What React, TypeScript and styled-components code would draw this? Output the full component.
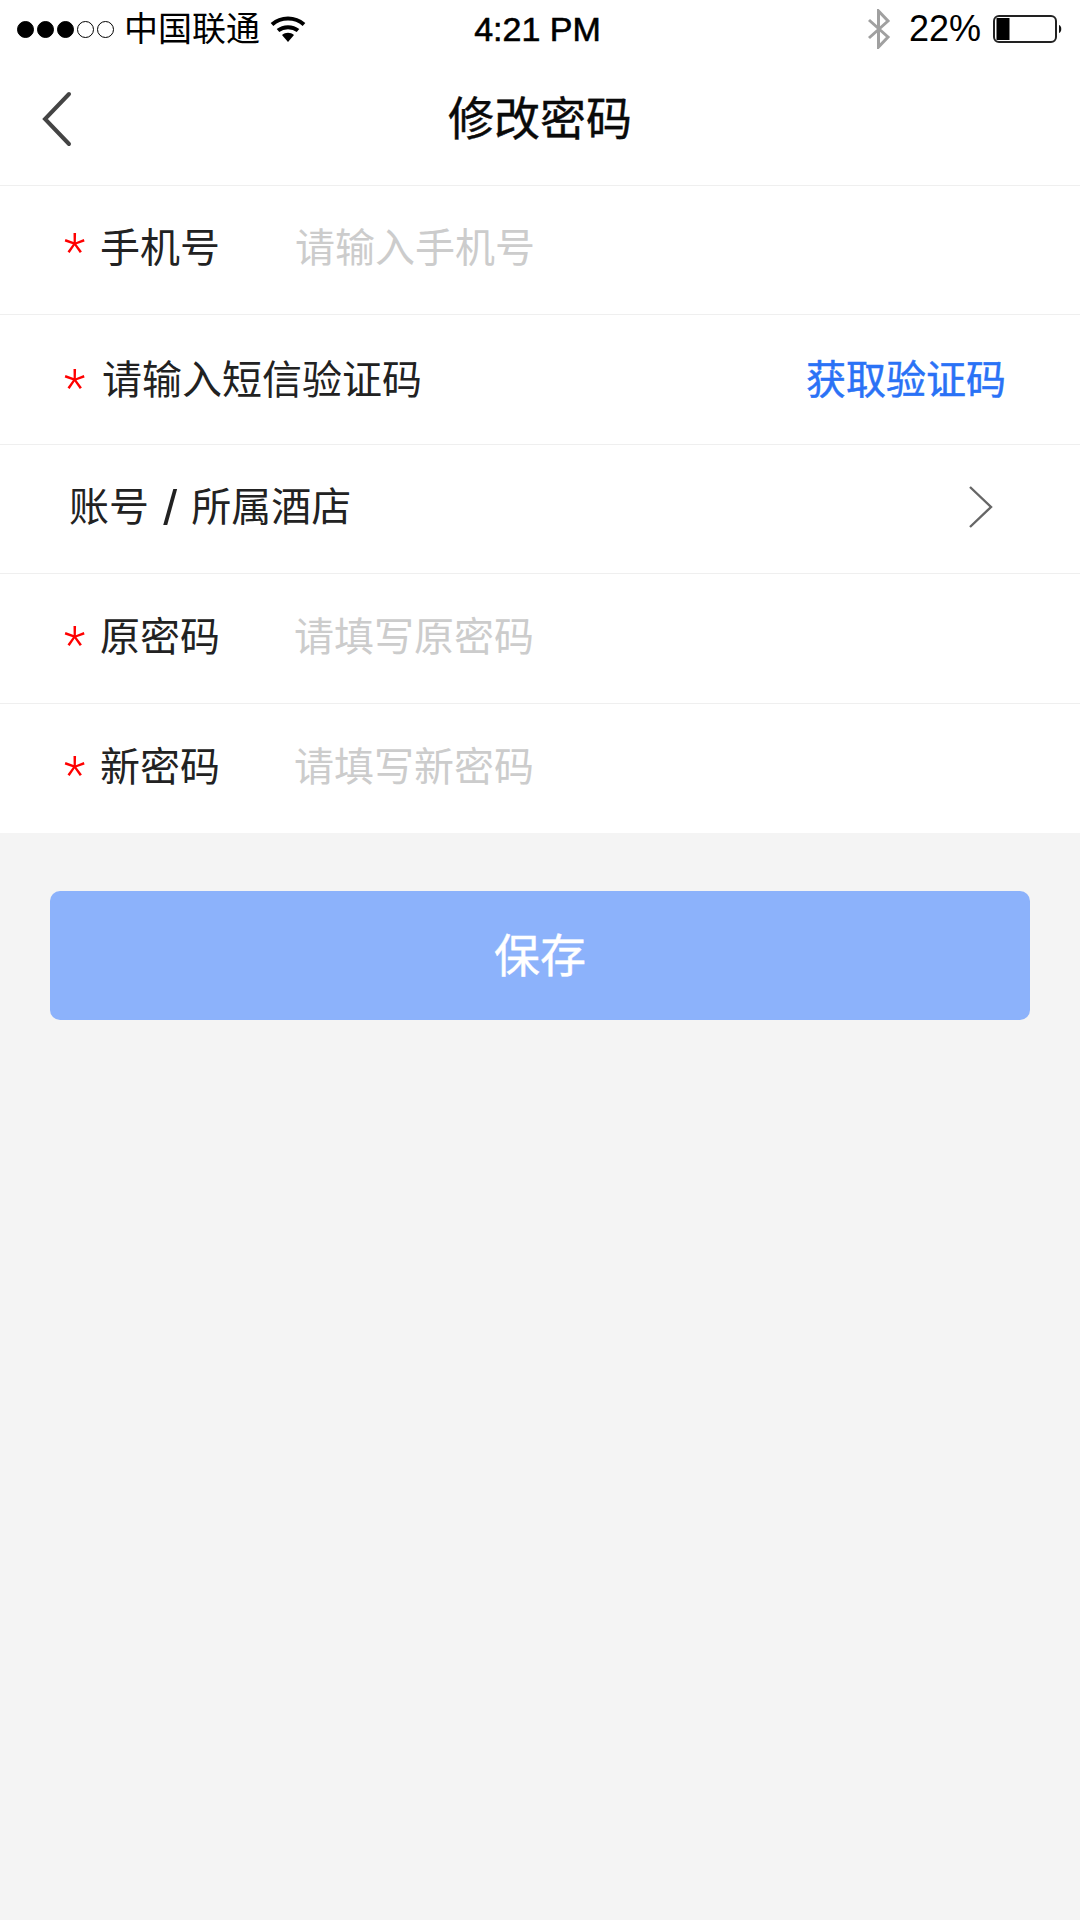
import React from "react";
import styled, { createGlobalStyle } from "styled-components";

const GlobalStyle = createGlobalStyle`
  html, body {
    margin: 0;
    padding: 0;
    background: #f4f4f4;
  }
  body {
    font-family: "Liberation Sans", "Noto Sans CJK SC", sans-serif;
  }
`;

const Page = styled.div`
  width: 1080px;
  min-height: 1920px;
  background: #f4f4f4;
  display: flex;
  flex-direction: column;
`;

const StatusBar = styled.div`
  height: 58px;
  background: #fff;
  padding: 0 16px 0 17px;
  display: grid;
  grid-template-columns: 1fr auto 1fr;
  align-items: center;
  color: #000;
`;

const StatusLeft = styled.div`
  display: flex;
  align-items: center;
  gap: 10px;
`;

const StatusRight = styled.div`
  display: flex;
  align-items: center;
  justify-content: flex-end;
`;

const Signal = styled.div`
  display: flex;
  gap: 3px;
  width: 97px;
`;

const Dot = styled.span<{ $on: boolean }>`
  width: 17px;
  height: 17px;
  border-radius: 50%;
  box-sizing: border-box;
  border: 1px solid #000;
  background: ${(p) => (p.$on ? "#000" : "#fff")};
`;

const Carrier = styled.span`
  font-size: 34px;
  line-height: 40px;
`;

const Clock = styled.span`
  font-size: 34px;
  -webkit-text-stroke: 0.6px #000;
  margin-right: 6px;
`;

const Percent = styled.span`
  font-size: 36px;
  margin: 0 12px 0 18px;
`;

const NavBar = styled.header`
  height: 127px;
  background: #fff;
  border-bottom: 1px solid #efefef;
  display: flex;
  align-items: center;
  justify-content: center;
  position: relative;
`;

const BackButton = styled.svg`
  position: absolute;
  left: 41px;
  top: 32px;
`;

const Title = styled.h1`
  margin: 0;
  padding-bottom: 5px;
  font-size: 46px;
  font-weight: 400;
  -webkit-text-stroke: 0.4px #0a0a0a;
  color: #0a0a0a;
  line-height: 60px;
`;

const Form = styled.section`
  background: #fff;
  display: flex;
  flex-direction: column;
`;

const Row = styled.div<{ $lift?: number }>`
  height: 129.4px;
  box-sizing: border-box;
  padding: 0 74px ${(p) => p.$lift ?? 8}px 64px;
  display: flex;
  align-items: center;
  border-bottom: 1px solid #efefef;
  font-size: 40px;
  color: #222;

  &:last-child {
    border-bottom: 0;
  }
`;

const Star = styled.span<{ $drop?: number }>`
  width: 36px;
  flex: none;
  color: #ff0000;
  font-family: Roboto, sans-serif;
  font-weight: 300;
  font-size: 50px;
  line-height: 40px;
  padding-top: ${(p) => p.$drop ?? 22}px;
`;

const Label = styled.span<{ $width?: number; $indent?: number }>`
  width: ${(p) => (p.$width ? `${p.$width}px` : "auto")};
  margin-left: ${(p) => p.$indent ?? 0}px;
  flex: none;
  word-spacing: 3px;
`;

const Slash = styled.span`
  font-size: 50px;
  line-height: 1;
  vertical-align: -4px;
`;

const Placeholder = styled.span`
  color: #cccccc;
`;

const SmsLink = styled.span`
  margin-left: auto;
  color: #2a72f6;
  -webkit-text-stroke: 0.5px #2a72f6;
`;

const Chevron = styled.svg`
  margin: 7px 13px 0 auto;
`;

const SaveButton = styled.button`
  margin: 58px 50px 0;
  height: 129px;
  padding: 0 0 6px;
  border: 0;
  border-radius: 10px;
  background: #8cb2fb;
  color: #fff;
  font: inherit;
  font-size: 46px;
  -webkit-text-stroke: 0.4px #fff;
`;

const WifiIcon = () => (
  <svg width="36" height="28" viewBox="0 0 36 28">
    <path d="M2 9.500C11 1.500 25 1.500 34 9.500" fill="none" stroke="#000" strokeWidth="4" />
    <path d="M8 15.500C13.500 11 22.500 11 28 15.500" fill="none" stroke="#000" strokeWidth="4" />
    <path d="M12 20C15.500 17 20.500 17 24 20L18 27Z" fill="#000" />
  </svg>
);

const BluetoothIcon = () => (
  <svg width="24" height="40" viewBox="0 0 24 40">
    <path d="M2 11L21 28L11.500 38V2L21 12L2 29" fill="none" stroke="#a0a0a0" strokeWidth="3" />
  </svg>
);

const BatteryIcon = () => (
  <svg width="71" height="30" viewBox="0 0 71 30">
    <rect x="1" y="2" width="62" height="26" rx="5" fill="#fff" stroke="#222" strokeWidth="2" />
    <rect x="3.500" y="4" width="13" height="22" fill="#000" />
    <path d="M66 11C69 11.500 69 18.500 66 19Z" fill="#111" />
  </svg>
);

const signal = [true, true, true, false, false];

const App = () => {
  return (
    <Page>
      <GlobalStyle />
      <StatusBar>
        <StatusLeft>
          <Signal>
            {signal.map((on, i) => (
              <Dot key={i} $on={on} />
            ))}
          </Signal>
          <Carrier>中国联通</Carrier>
          <WifiIcon />
        </StatusLeft>
        <Clock>4:21 PM</Clock>
        <StatusRight>
          <BluetoothIcon />
          <Percent>22%</Percent>
          <BatteryIcon />
        </StatusRight>
      </StatusBar>
      <NavBar>
        <BackButton width="32" height="58" viewBox="0 0 32 58">
          <path d="M28 4L4 29L28 54" fill="none" stroke="#444" strokeWidth="4" strokeLinecap="round" />
        </BackButton>
        <Title>修改密码</Title>
      </NavBar>
      <Form>
        <Row $lift={10}>
          <Star $drop={14}>*</Star>
          <Label $width={195}>手机号</Label>
          <Placeholder>请输入手机号</Placeholder>
        </Row>
        <Row $lift={5}>
          <Star>*</Star>
          <Label $indent={2}>请输入短信验证码</Label>
          <SmsLink>获取验证码</SmsLink>
        </Row>
        <Row $lift={10}>
          <Label $indent={5}>
            账号 <Slash>/</Slash> 所属酒店
          </Label>
          <Chevron width="26" height="44" viewBox="0 0 26 44">
            <path d="M3 2L24 22L3 42" fill="none" stroke="#666" strokeWidth="2.4" />
          </Chevron>
        </Row>
        <Row>
          <Star>*</Star>
          <Label $width={194}>原密码</Label>
          <Placeholder>请填写原密码</Placeholder>
        </Row>
        <Row>
          <Star>*</Star>
          <Label $width={194}>新密码</Label>
          <Placeholder>请填写新密码</Placeholder>
        </Row>
      </Form>
      <SaveButton>保存</SaveButton>
    </Page>
  );
};

export default App;
